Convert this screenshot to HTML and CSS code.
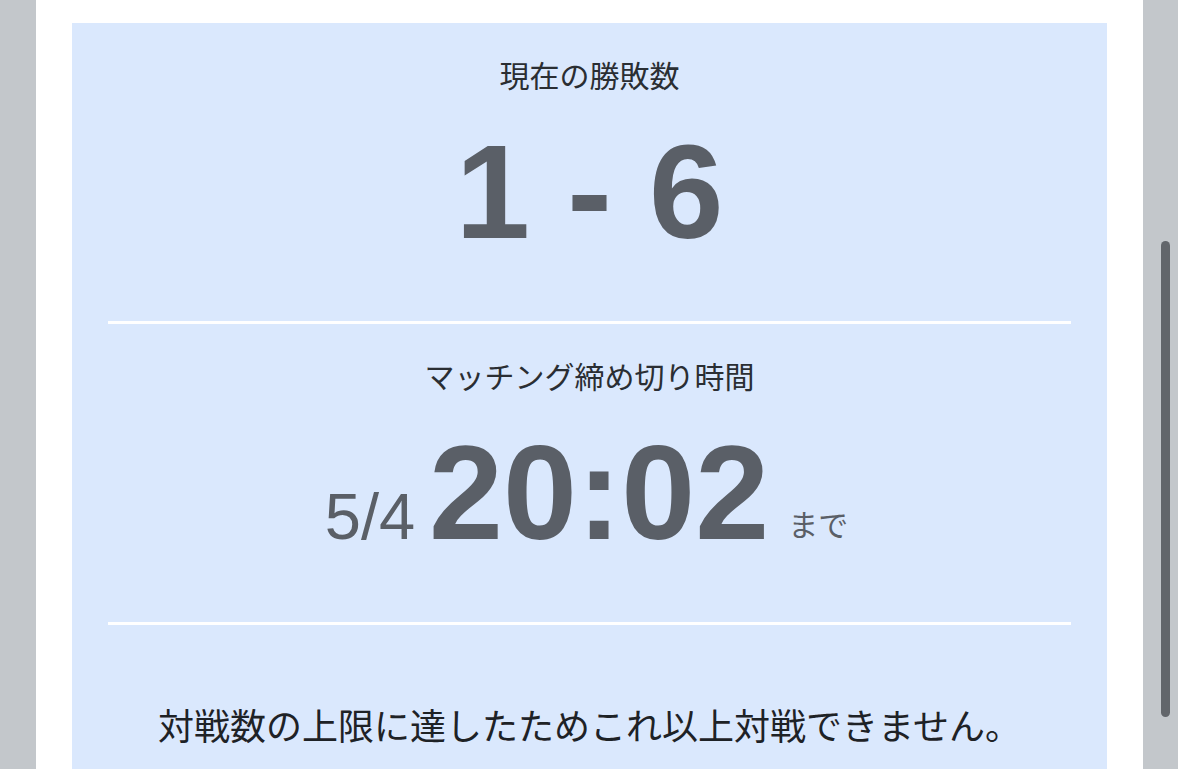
FILE: index.html
```html
<!DOCTYPE html>
<html lang="ja">
<head>
<meta charset="utf-8">
<title>対戦状況</title>
<link rel="stylesheet" href="styles.css">
</head>
<body>
<div class="page">
  <section class="panel">
    <div class="stat">
      <p class="stat-label">現在の勝敗数</p>
      <p class="stat-score">1 - 6</p>
    </div>
    <hr class="rule">
    <div class="stat">
      <p class="stat-label">マッチング締め切り時間</p>
      <p class="deadline"><span class="deadline-date">5/4</span><span class="deadline-time">20:02</span><span class="deadline-until">まで</span></p>
    </div>
    <hr class="rule">
    <p class="notice">対戦数の上限に達したためこれ以上対戦できません。</p>
  </section>
</div>
<div class="scrollbar"></div>
</body>
</html>
```
FILE: styles.css
```css
html, body {
  margin: 0;
  height: 100%;
  overflow: hidden;
}

body {
  background: #c3c7cb;
  font-family: "Noto Sans CJK JP", "Liberation Sans", sans-serif;
}

.page {
  margin: 0 35px 0 36px;
  min-height: 100%;
  background: #ffffff;
  padding: 23px 36px 0;
  box-sizing: border-box;
}

.panel {
  background: #dae8fd;
  padding: 0 36px 60px;
  min-height: 800px;
  box-sizing: border-box;
}

.stat {
  display: flex;
  flex-direction: column;
  align-items: center;
  padding-top: 36px;
  padding-bottom: 62px;
}

.stat-label {
  margin: 0;
  font-size: 30px;
  line-height: 1;
  color: #2a2e33;
}

.stat-score {
  margin: 36px 0 0;
  font-family: "Liberation Sans", Arial, sans-serif;
  font-weight: 700;
  font-size: 134px;
  line-height: 1;
  color: #5a5f67;
  white-space: pre;
}

/* date, time and suffix share one text line so the suffix can sit on its own baseline shift */
.deadline {
  margin: 37px 0 0;
  padding-right: 6px;
  font-size: 0;
  line-height: 1;
  color: #5a5f67;
  white-space: nowrap;
}

.deadline-date {
  font-family: "Liberation Sans", Arial, sans-serif;
  font-size: 65px;
  margin-right: 14px;
}

.deadline-time {
  font-family: "Liberation Sans", Arial, sans-serif;
  font-weight: 700;
  font-size: 133px;
}

.deadline-until {
  font-size: 30px;
  margin-left: 19px;
  vertical-align: 3px;
}

.rule {
  margin: 0;
  border: 0;
  height: 3px;
  background: #ffffff;
}

.notice {
  margin: 81px 0 0;
  text-align: center;
  font-size: 36px;
  line-height: 1;
  color: #1e2226;
}

.scrollbar {
  position: fixed;
  left: 1161px;
  top: 241px;
  width: 9px;
  height: 476px;
  border-radius: 5px;
  background: #62666b;
}
```
